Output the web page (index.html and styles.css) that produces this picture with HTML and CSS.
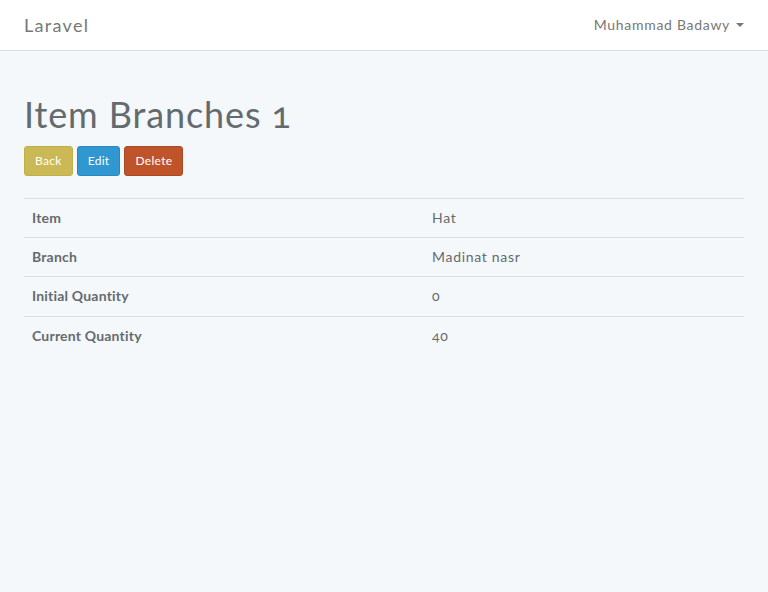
FILE: index.html
```html
<!DOCTYPE html>
<html>
<head>
<meta charset="utf-8">
<link rel="stylesheet" href="styles.css">
</head>
<body>
<nav class="navbar">
  <div class="container nav-inner">
    <a class="brand" href="#">Laravel</a>
    <a class="user" href="#">Muhammad Badawy <span class="caret"></span></a>
  </div>
</nav>
<div class="container">
  <h1 class="title">Item Branches 1</h1>
  <div class="actions">
    <a class="btn btn-warning" href="#">Back</a>
    <a class="btn btn-primary" href="#">Edit</a>
    <a class="btn btn-danger" href="#">Delete</a>
  </div>
  <table class="table">
    <tbody>
      <tr><th>Item</th><td>Hat</td></tr>
      <tr><th>Branch</th><td>Madinat nasr</td></tr>
      <tr><th>Initial Quantity</th><td>0</td></tr>
      <tr><th>Current Quantity</th><td>40</td></tr>
    </tbody>
  </table>
</div>
</body>
</html>
```
FILE: styles.css
```css
* { box-sizing: border-box; }
html, body { margin: 0; padding: 0; }
body {
  background: #f5f8fa;
  font-family: Lato, "Open Sans", sans-serif;
  font-size: 14px;
  line-height: 1.6;
  color: #636b6f;
  letter-spacing: 0.05em;
  font-variant-numeric: oldstyle-nums;
}
a { text-decoration: none; }
.container {
  width: 750px;
  margin: 0 auto;
  padding: 0 15px;
}
.navbar {
  background: #fff;
  border-bottom: 1px solid #d3e0e9;
  height: 51px;
}
.nav-inner {
  display: flex;
  justify-content: space-between;
  align-items: center;
  height: 50px;
}
.brand {
  color: #777;
  font-size: 18px;
  line-height: 22px;
  letter-spacing: 1.3px;
}
.user {
  color: #777;
  font-size: 14px;
  line-height: 22px;
  display: flex;
  align-items: center;
}
.caret {
  display: inline-block;
  width: 0;
  height: 0;
  margin-left: 6px;
  border-top: 4px solid #777;
  border-left: 4px solid transparent;
  border-right: 4px solid transparent;
}
.title {
  font-size: 36px;
  font-weight: 400;
  line-height: 1.1;
  letter-spacing: 0.9px;
  margin: 44px 0 11px;
  color: #636b6f;
}
.actions {
  display: flex;
  gap: 4px;
  margin-bottom: 22px;
}
.btn {
  display: inline-block;
  font-size: 12px;
  line-height: 1.5;
  letter-spacing: 0.3px;
  padding: 5px 10px;
  border-radius: 3px;
  border: 1px solid transparent;
  color: #fff;
}
.btn-warning { background: #cbb956; border-color: #c1b048; }
.btn-primary { background: #3097d1; border-color: #2a88bd; }
.btn-danger { background: #bf5329; border-color: #aa4a24; }
.table {
  width: 100%;
  border-collapse: collapse;
  border-spacing: 0;
}
.table th, .table td {
  padding: 8px;
  line-height: 1.6;
  border-top: 1px solid #ddd;
  text-align: left;
  vertical-align: top;
}
.table th { width: 400px; font-weight: 700; letter-spacing: 0.2px; }
```
